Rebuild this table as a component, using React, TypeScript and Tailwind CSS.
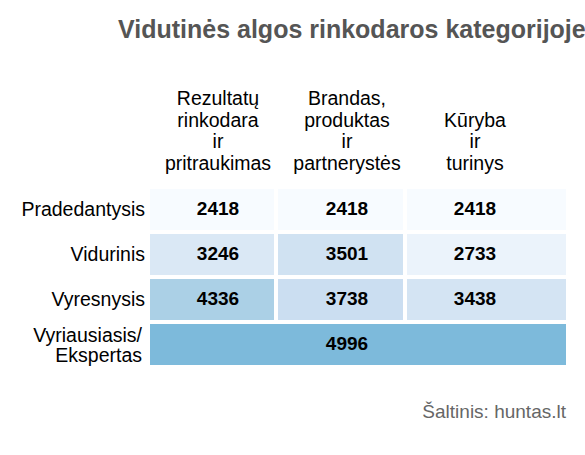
const cols = 'grid grid-cols-[146px_124px_125px_159px] gap-x-1';

const rows = [
  { label: 'Pradedantysis', values: ['2418', '2418', '2418'], colors: ['bg-[#f7fbff]', 'bg-[#f7fbff]', 'bg-[#f7fbff]'] },
  { label: 'Vidurinis', values: ['3246', '3501', '2733'], colors: ['bg-[#dae8f5]', 'bg-[#d0e2f2]', 'bg-[#ebf3fb]'] },
  { label: 'Vyresnysis', values: ['4336', '3738', '3438'], colors: ['bg-[#abd0e6]', 'bg-[#cbdef1]', 'bg-[#d4e4f3]'] },
];

const shifts = ['pl-3', 'pl-[13px]', 'pr-[23px]'];

const App = () => {
  return (
    <div className="w-[585px] h-[455px] overflow-hidden bg-white font-['Liberation_Sans',Arial,sans-serif] text-black">
      {/* Title */}
      <h1 className="pt-[15px] pl-[118px] whitespace-nowrap text-[25px] leading-[29px] font-bold text-[#555555]">
        Vidutinės algos rinkodaros kategorijoje
      </h1>

      {/* Column headers */}
      <div className={`${cols} mt-[44px] items-end text-[19.5px] leading-[21.5px] text-center`}>
        <div />
        <div className={shifts[0]}>Rezultatų<br />rinkodara<br />ir<br />pritraukimas</div>
        <div className={`${shifts[1]} whitespace-nowrap`}>Brandas,<br />produktas<br />ir<br />partnerystės</div>
        <div className={shifts[2]}>Kūryba<br />ir<br />turinys</div>
      </div>

      {/* Heatmap */}
      <div className="mt-[15px] flex flex-col gap-y-1">
        {rows.map((row) => (
          <div key={row.label} className={`${cols} h-[41px]`}>
            <div className="flex items-center justify-end pr-px text-[19.5px]">{row.label}</div>
            {row.values.map((v, i) => (
              <div
                key={i}
                className={`${row.colors[i]} ${shifts[i]} flex items-center justify-center text-[19px] font-bold`}
              >
                {v}
              </div>
            ))}
          </div>
        ))}
        <div className={`${cols} h-[41px]`}>
          <div className="flex flex-col items-end justify-center pr-[4px] text-right text-[19.5px] leading-[20px]">
            <span>Vyriausiasis/</span>
            <span>Ekspertas</span>
          </div>
          <div className="col-span-3 grid grid-cols-[124px_125px_159px] gap-x-1 bg-[#7dbadb]">
            <div />
            <div className={`${shifts[1]} flex items-center justify-center text-[19px] font-bold`}>4996</div>
            <div />
          </div>
        </div>
      </div>

      {/* Source */}
      <p className="mt-[36px] pr-[19px] text-right text-[19px] leading-[22px] text-[#666666]">
        Šaltinis: huntas.lt
      </p>
    </div>
  );
};

export default App;
